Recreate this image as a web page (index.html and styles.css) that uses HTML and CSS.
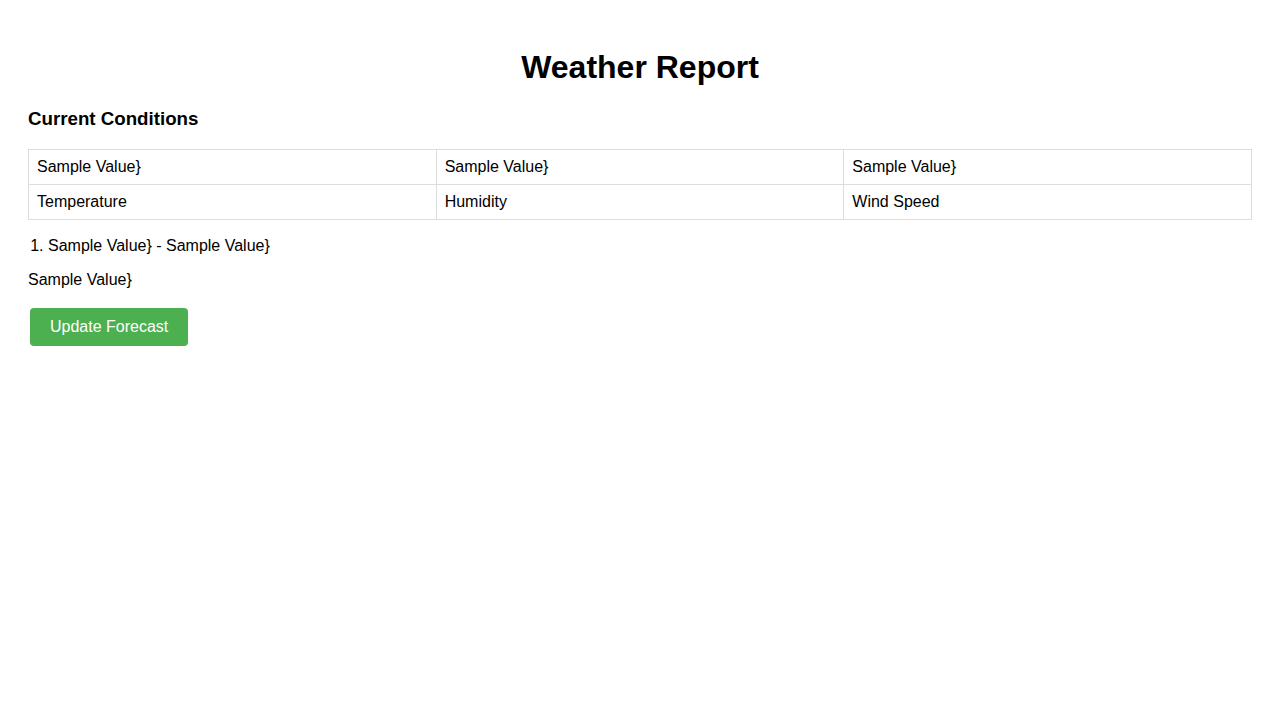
FILE: index.html
```html
<!DOCTYPE html>
<html lang="en">
<head>
<meta charset="utf-8">
<title>Weather Report</title>
<link rel="stylesheet" href="styles.css">
</head>
<body>
<div class="page">
  <h1 class="title">Weather Report</h1>
  <h3 class="section-title">Current Conditions</h3>
  <table class="conditions">
    <tr>
      <td>Sample Value}</td>
      <td>Sample Value}</td>
      <td>Sample Value}</td>
    </tr>
    <tr>
      <td>Temperature</td>
      <td>Humidity</td>
      <td>Wind Speed</td>
    </tr>
  </table>
  <ol class="forecast">
    <li>Sample Value} - Sample Value}</li>
  </ol>
  <p class="note">Sample Value}</p>
  <div class="actions">
    <button class="btn" type="button">Update Forecast</button>
  </div>
</div>
</body>
</html>
```
FILE: styles.css
```css
body {
  margin: 8px;
  font-family: "Liberation Sans", Arial, sans-serif;
  font-size: 16px;
  color: #000;
  background: #fff;
}
.page {
  padding: 20px;
}
.title {
  font-size: 32px;
  font-weight: bold;
  text-align: center;
  margin: 21.44px 0;
}
.section-title {
  font-size: 18.72px;
  font-weight: bold;
  margin: 18.72px 0;
}
.conditions {
  width: 100%;
  border-collapse: collapse;
  table-layout: fixed;
}
.conditions td {
  border: 1px solid #ddd;
  padding: 8px;
  text-align: left;
}
.forecast {
  margin: 17px 0 16px;
  padding-left: 20px;
}
.note {
  margin: 16px 0;
}
.actions {
  padding: 3px 2px 0;
}
.btn {
  font-family: "Liberation Sans", Arial, sans-serif;
  font-size: 16px;
  background: #4caf50;
  color: #fff;
  border: none;
  border-radius: 4px;
  padding: 10px 20px;
  margin: 0;
  cursor: pointer;
}
```
